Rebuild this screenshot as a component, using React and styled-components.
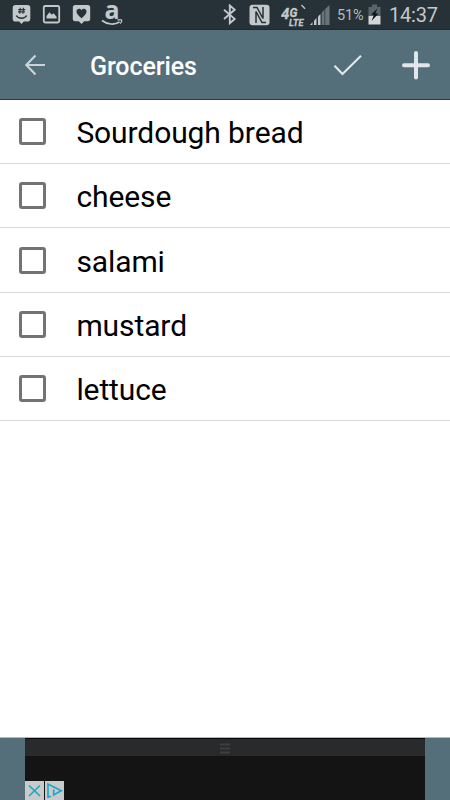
import React, { useState } from 'react'
import styled, { createGlobalStyle } from 'styled-components'

const GlobalStyle = createGlobalStyle`
    body {
        margin: 0;
        background: #fff;
        font-family: Roboto, "Noto Sans", sans-serif;
    }

    svg {
        display: block;
        flex: none;
    }
`

const Screen = styled.div`
    display: flex;
    flex-direction: column;
    width: 450px;
    height: 800px;
    overflow: hidden;
    background: #fff;
`

const StatusBar = styled.div`
    display: flex;
    justify-content: space-between;
    box-sizing: border-box;
    height: 30px;
    padding: 0 12px;
    background: #263238;
    border-bottom: 1px solid #1f2b31;
`

const StatusGroup = styled.div`
    display: flex;
    align-items: center;
    gap: ${({ $gap }) => $gap || 0}px;
    margin-right: ${({ $right }) => $right || 0}px;
`

const BatteryText = styled.span`
    width: 28px;
    margin: 2px 3px 0 7px;
    color: #b4babd;
    font-size: 14.5px;
    letter-spacing: -0.2px;
    line-height: 20px;
    white-space: nowrap;
`

const Clock = styled.span`
    width: 49px;
    margin: 1px 0 0 8px;
    color: #c3c8ca;
    font-size: 20px;
    letter-spacing: -0.2px;
    line-height: 24px;
    white-space: nowrap;
`

const Toolbar = styled.header`
    display: flex;
    align-items: center;
    box-sizing: border-box;
    height: 70px;
    padding: 0 19px 0 23px;
    background: #546e7a;
    border-bottom: 1px solid #0b4a55;
`

const ToolButton = styled.button`
    display: flex;
    padding: 0;
    border: none;
    background: none;
    margin-left: ${({ $left }) => $left || 0}px;
`

const Title = styled.h1`
    flex: 1;
    margin: 4px 0 0 43px;
    color: #fff;
    font-size: 25px;
    font-weight: 500;
    letter-spacing: -0.1px;
    line-height: 30px;
`

const List = styled.ul`
    flex: 1;
    margin: 0;
    padding: 0;
    list-style: none;
`

const Item = styled.li`
    display: flex;
    align-items: center;
    box-sizing: border-box;
    height: 64.2px;
    padding: 0.2px 0 0 19px;
    border-bottom: 1px solid #dadada;
`

const Checkbox = styled.button`
    flex: none;
    box-sizing: border-box;
    width: 27px;
    height: 27px;
    padding: 0;
    border: 3px solid #737373;
    border-radius: 3px;
    background: ${({ $checked }) => ($checked ? '#737373' : '#fff')};
`

const ItemName = styled.span`
    margin: 3px 0 0 30.4px;
    color: #000;
    font-size: 30px;
    letter-spacing: -0.1px;
    line-height: 36px;
`

const AdBar = styled.footer`
    display: flex;
    justify-content: center;
    box-sizing: border-box;
    height: 63px;
    background: #546e7a;
    border-top: 1px solid #b4bbbd;
`

const Ad = styled.div`
    display: flex;
    flex-direction: column;
    justify-content: space-between;
    width: 400px;
    background: #141414;
`

const AdHandle = styled.div`
    display: flex;
    justify-content: center;
    box-sizing: border-box;
    height: 18px;
    padding-top: 4px;
    background: #292a2c;
    border-top: 1px solid #080808;
`

const AdChoices = styled.div`
    display: flex;
    gap: 1px;
`

const AdButton = styled.button`
    display: flex;
    padding: 0;
    border: none;
    background: #c9cacb;
`

const groceries = ['Sourdough bread', 'cheese', 'salami', 'mustard', 'lettuce']

function GroupMeIcon() {
    return (
        <svg width="19" height="21" viewBox="0 0 19 21">
            <path d="M3.500 1h12a2.800 2.800 0 0 1 2.800 2.800v11a2.800 2.800 0 0 1-2.800 2.800h-3.700L9.500 20l-2.300-2.400H3.500a2.800 2.800 0 0 1-2.800-2.800v-11A2.800 2.800 0 0 1 3.500 1z" fill="#c3c8ca" />
            <path d="M8.300 3.700l-.6 6M11.500 3.700l-.6 6M6.300 5.600h7M6 7.900h7" stroke="#263238" strokeWidth="1.100" />
            <path d="M4.300 11.500c2 3.600 8.400 3.600 10.400 0" fill="none" stroke="#263238" strokeWidth="1.500" />
        </svg>
    )
}

function PictureIcon() {
    return (
        <svg width="19" height="21" viewBox="0 0 19 21">
            <rect x="1.800" y="2" width="15.400" height="16.500" rx="1.500" fill="none" stroke="#c3c8ca" strokeWidth="1.800" />
            <path d="M4.500 14.500v-2.500l3-3.800 2.300 2.500 1.800-1.500 3 3.500v1.800z" fill="#c3c8ca" />
        </svg>
    )
}

function HeartIcon() {
    return (
        <svg width="19" height="21" viewBox="0 0 19 21">
            <path d="M3.300 1h12.400a2.500 2.500 0 0 1 2.500 2.500v11.300a2.500 2.500 0 0 1-2.500 2.500h-3.500L9.500 20l-2.700-2.700H3.300a2.500 2.500 0 0 1-2.500-2.500V3.500A2.500 2.500 0 0 1 3.300 1z" fill="#c3c8ca" />
            <path d="M9.500 14.300C6.500 11.800 4.500 10 4.500 7.600c0-3 3.600-3.700 5-1.400 1.400-2.300 5-1.600 5 1.400 0 2.400-2 4.200-5 6.700z" fill="#263238" />
        </svg>
    )
}

function AmazonIcon() {
    return (
        <svg width="21" height="23" viewBox="0 0 21 23" overflow="visible">
            <text x="2.500" y="15.800" fill="#c3c8ca" fontFamily="Open Sans, sans-serif" fontWeight="700" fontSize="25">a</text>
            <path d="M0 17.500c5.500 4.300 12.500 4.500 17.600 1.600" fill="none" stroke="#c3c8ca" strokeWidth="1.700" />
            <path d="M15.400 17.200c1.500-.6 3-.8 4.300-.2.100 1.300-.4 2.700-1.400 3.700" fill="none" stroke="#c3c8ca" strokeWidth="1.200" />
        </svg>
    )
}

function BluetoothIcon() {
    return (
        <svg width="16" height="21" viewBox="0 0 16 21">
            <path d="M2 5.700l10.700 9.200-4.900 4.300V1.500l4.900 4.300L2 15" fill="none" stroke="#c3c8ca" strokeWidth="1.900" />
        </svg>
    )
}

function NfcIcon() {
    return (
        <svg width="21" height="22" viewBox="0 0 21 22">
            <rect x=".5" y=".7" width="20" height="20.600" rx="3" fill="#c3c8ca" />
            <path d="M4 3.500h4l6 11V3M7 19V7.500l6 11h4" fill="none" stroke="#263238" strokeWidth="1.500" />
        </svg>
    )
}

function LteIcon() {
    return (
        <svg width="27" height="24" viewBox="0 0 27 24">
            <g fill="#c3c8ca" stroke="#c3c8ca" strokeWidth=".3" fontFamily="Roboto, sans-serif" fontWeight="700" fontStyle="italic">
                <text x="0" y="15.500" fontSize="15">4</text>
                <text x="8.500" y="14" fontSize="12">G</text>
                <text x="8" y="22.500" fontSize="9" textLength="14.500">LTE</text>
            </g>
            <path d="M20.500 2l3.500 3.800" stroke="#c3c8ca" strokeWidth="1.300" />
        </svg>
    )
}

function SignalIcon() {
    return (
        <svg width="20" height="22" viewBox="0 0 20 22">
            <g fill="#c3c8ca">
                <path d="M0 21l2.500-2.700V21z" />
                <path d="M4 16.800l2.500-2.700V21H4z" />
                <path d="M8 12.600l2.500-2.700V21H8z" />
            </g>
            <path d="M11.700 8.600l2.800-3V21h-2.800zM15.200 5L19.500 1v20h-4.300z" fill="#69747a" />
        </svg>
    )
}

function BatteryIcon() {
    return (
        <svg width="13" height="21" viewBox="0 0 13 21">
            <path d="M4 .5h5v2.500h3.500v9H.5V3H4z" fill="#59656b" />
            <rect x=".5" y="12" width="12" height="8.500" fill="#d3d6d7" />
            <path d="M9.500 4.500L3 10.800h3L3.500 17l7-7.400H7.300z" fill="#0d1215" />
        </svg>
    )
}

function App() {
    const [checked, setChecked] = useState([])

    const toggle = (name) => {
        setChecked(checked.includes(name) ? checked.filter(n => n !== name) : [...checked, name])
    }

    return (
        <Screen>
            <GlobalStyle />

            <StatusBar>
                <StatusGroup $gap={11}>
                    <GroupMeIcon />
                    <PictureIcon />
                    <HeartIcon />
                    <AmazonIcon />
                </StatusGroup>

                <StatusGroup>
                    <StatusGroup $gap={11} $right={2}>
                        <BluetoothIcon />
                        <NfcIcon />
                        <LteIcon />
                    </StatusGroup>
                    <SignalIcon />
                    <BatteryText>51%</BatteryText>
                    <BatteryIcon />
                    <Clock>14:37</Clock>
                </StatusGroup>
            </StatusBar>

            <Toolbar>
                <ToolButton aria-label="Back">
                    <svg width="24" height="24" viewBox="0 0 24 24">
                        <path d="M22 12H3.500M12.500 2.600L3.300 12l9.200 9.400" fill="none" stroke="#cbd3d7" strokeWidth="2.200" />
                    </svg>
                </ToolButton>
                <Title>Groceries</Title>
                <ToolButton aria-label="Done">
                    <svg width="30" height="24" viewBox="0 0 30 24">
                        <path d="M1.500 12.800l8 8.200L28 2.800" fill="none" stroke="#e1e6e8" strokeWidth="2.200" />
                    </svg>
                </ToolButton>
                <ToolButton aria-label="Add" $left={38}>
                    <svg width="30" height="30" viewBox="0 0 30 30">
                        <path d="M15 3v24.500M3 15.300h24" stroke="#e1e6e8" strokeWidth="4" strokeLinecap="round" />
                    </svg>
                </ToolButton>
            </Toolbar>

            <List>
                {groceries.map(name => (
                    <Item key={name}>
                        <Checkbox
                            aria-label={name}
                            $checked={checked.includes(name)}
                            onClick={() => toggle(name)}
                        />
                        <ItemName>{name}</ItemName>
                    </Item>
                ))}
            </List>

            {/* banner ad */}
            <AdBar>
                <Ad>
                    <AdHandle>
                        <svg width="12" height="11" viewBox="0 0 12 11">
                            <path d="M1 1.500h10M1 5.500h10M1 9.500h10" stroke="#3d3e3f" strokeWidth="2" />
                        </svg>
                    </AdHandle>
                    <AdChoices>
                        <AdButton aria-label="Close ad">
                            <svg width="19" height="19" viewBox="0 0 19 19">
                                <path d="M4 4.500l11 10.500M15 4.500L4 15" stroke="#17a8c6" strokeWidth="1.600" />
                            </svg>
                        </AdButton>
                        <AdButton aria-label="Ad choices">
                            <svg width="19" height="19" viewBox="0 0 19 19">
                                <path d="M5.800 15.200l-2.800 1V3l13.300 6.700-7.600 4.200V8.500M8.700 5.500v1.600" fill="none" stroke="#17a8c6" strokeWidth="1.600" />
                            </svg>
                        </AdButton>
                    </AdChoices>
                </Ad>
            </AdBar>
        </Screen>
    )
}

export default App
